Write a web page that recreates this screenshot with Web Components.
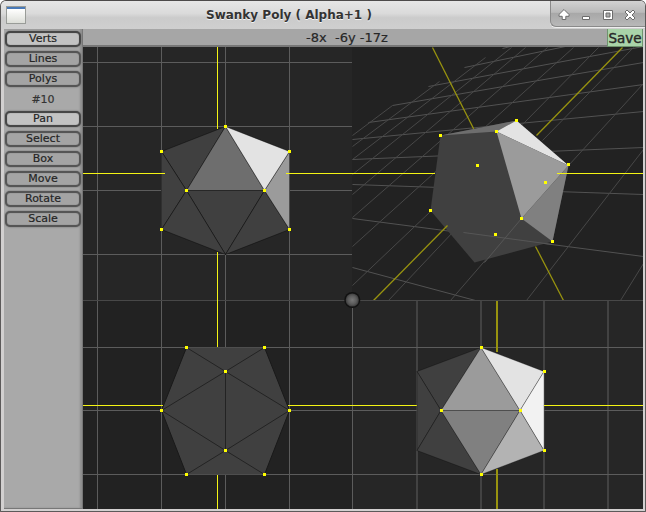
<!DOCTYPE html>
<html lang="en"><head><meta charset="utf-8"><title>Swanky Poly</title>
<style>html,body{margin:0;background:#fff;overflow:hidden}body{font-family:"DejaVu Sans",sans-serif}</style></head>
<body>
<poly-window>
<title-bar slot="title">Swanky Poly ( Alpha+1 )</title-bar>
<tool-panel slot="tools">
<tool-button active>Verts</tool-button><tool-button>Lines</tool-button><tool-button>Polys</tool-button>
<tool-count>#10</tool-count>
<tool-button active>Pan</tool-button><tool-button>Select</tool-button><tool-button>Box</tool-button><tool-button>Move</tool-button><tool-button>Rotate</tool-button><tool-button>Scale</tool-button>
</tool-panel>
<status-bar slot="status">-8x&nbsp; -6y -17z</status-bar>
<poly-views slot="views"></poly-views>
</poly-window>
<script>
const define=(name,html,setup)=>customElements.define(name,class extends HTMLElement{
  constructor(){super();this.attachShadow({mode:'open'}).innerHTML=html;if(setup)setup(this.shadowRoot)}
});

define('poly-window',`<style>
:host{display:grid;box-sizing:border-box;width:646px;height:512px;padding:0 2px 2px 3px;border:1px solid #5c5a5a;border-top-color:#4c4a4a;border-radius:6px 6px 1px 1px;background:#d2d0d0;grid-template:28px 18px 462px / 79px 560px;overflow:hidden}
::slotted([slot=title]){grid-column:1/3;margin:0 -2px 0 -3px}
::slotted([slot=tools]){grid-row:2/4}
</style><slot name="title"></slot><slot name="tools"></slot><slot name="status"></slot><slot name="views"></slot>`);

define('title-bar',`<style>
:host{display:grid;grid-template-columns:1fr 95px;background:linear-gradient(#e6e6e6,#dadada 45%,#cbcbcb 60%,#cfcfcf);color:#333;font-size:12px;font-weight:bold}
.name{display:flex;align-items:center;padding-left:5px}
.app{width:20px;height:18px;box-sizing:border-box;border:1px solid #999c98;background:linear-gradient(#4a7ab8 0 2px,#fff 2px,#dcded8)}
.text{margin-left:180px;font-size:12px;line-height:28px;text-shadow:0 1px #f4f4f4;white-space:nowrap}
.controls{height:25px;background:linear-gradient(#d2d2d2,#bababa 45%,#a8a8a8 50%,#b8b8b8);border:solid #8a8a8a;border-width:0 0 1px 1px;border-radius:0 0 0 6px;box-shadow:0 1px #eee}
svg{display:block}
</style><div class="name"><span class="app"></span><span class="text"><slot></slot></span></div>
<div class="controls"><svg width="94" height="26" viewBox="551 1 94 26"><g fill="#fff" stroke="#6c6c6c" stroke-width="1">
<path d="M564 9.500l5 5v1.800h-3.200v3.200h-3.600v-3.200H559v-1.800z"/>
<path d="M582.500 16.500h7v3h-7z"/>
<path fill-rule="evenodd" d="M603.500 10.500h9v9h-9zm2.500 2.500v4h4v-4z"/>
<path d="M625 12l2-2 3 3 3-3 2 2-3 3 3 3-2 2-3-3-3 3-2-2 3-3z"/></g></svg></div>`);

define('tool-panel',`<style>
:host{display:flex;flex-direction:column;gap:4px;box-sizing:border-box;height:480px;padding:2px 1px 0 1px;background:#a9a9a9;border-bottom:1px solid #777;border-right:1px solid #777;box-shadow:inset -2px 0 2px #8e8e8e}
</style><slot></slot>`);
define('tool-button',`<style>
:host{display:block;box-sizing:border-box;height:16px;border:2px solid #555;border-radius:5px;background:#a4a4a4;box-shadow:0 0 2px #666,inset 0 0 1px #666;color:#252525;font-size:11px;line-height:12px;text-align:center;-webkit-text-stroke:.2px #252525}
:host([active]){background:#c3c3c3;border-color:#474747}
</style><slot></slot>`);
define('tool-count',`<style>:host{display:block;height:16px;font-size:11px;line-height:17px;text-align:center;color:#333;-webkit-text-stroke:.2px #333}</style><slot></slot>`);

define('status-bar',`<style>
:host{display:grid;grid-template-columns:1fr 36px;background:#a6a6a6;color:#272727;font-size:13px;line-height:17px}
.pos{text-align:center;padding-left:4px;border-bottom:2px solid #777;height:16px;-webkit-text-stroke:.2px #272727}
.save{box-sizing:border-box;height:18px;border:solid #6e946e;border-width:0 1px 1px;background:#a9d3a9;text-align:center;font-size:13.500px;line-height:18px;-webkit-text-stroke:.4px #272727}
</style><div class="pos"><slot></slot></div><div class="save">Save</div>`);

define('poly-views',`<style>:host{display:block}svg{display:block}</style>
<svg width="560" height="462" viewBox="83 47 560 462"></svg>`,root=>{
  const out=[];
  const box=(x,y,w,h,c)=>out.push(`<rect x="${x}" y="${y}" width="${w}" height="${h}" fill="${c}"/>`);
  const v=(x,a,b,c,w=1)=>box(x,a,w,b-a,c), h=(y,a,b,c)=>box(a,y,b-a,1,c);
  const line=(a,c,w=1)=>out.push(`<line x1="${a[0]+.5}" y1="${a[1]+.5}" x2="${a[2]+.5}" y2="${a[3]+.5}" stroke="${c}" stroke-width="${w}"/>`);
  const poly=(p,c,s,dx=.5)=>out.push(`<polygon points="${p.map(q=>(q[0]+dx)+','+(q[1]+.5)).join(' ')}" fill="${c}" ${s?`stroke="${s}" stroke-width="1" stroke-linejoin="round"`:''}/>`);
  const dots=a=>a.forEach(p=>box(p[0]-1,p[1]-1,3,3,'#ffff00'));
  const Y='#f4f414', D='#98930f';
  box(83,47,269,253,'#262626');box(352,47,291,253,'#222');box(83,300,269,209,'#222');box(352,300,291,209,'#262626');

  // front view
  [97,161,225,289].forEach(x=>v(x,47,300,'#5c5c5c'));
  [62,126,190,254].forEach(y=>h(y,83,352,'#5c5c5c'));
  {const p=[[225,126],[161,151],[289,151],[186,190],[264,190],[161,229],[289,229],[225,254]];
  [[0,1,3,'#404040'],[1,3,5,'#404040'],[0,3,4,'#6e6e6e'],[3,4,7,'#404040'],[3,5,7,'#404040'],[4,6,7,'#404040'],[2,4,6,'#9b9b9b'],[0,2,4,'#e3e3e3']].forEach(f=>poly(f.slice(0,3).map(i=>p[i]),f[3],'rgba(0,0,0,.38)'));
  v(217,47,129,Y);v(217,252,300,Y);h(173,83,165,Y);
  dots(p.slice(0,7));}

  // perspective view
  [[368,122,643,84],[392,105,643,62],[428,86,643,46],[464,67,565,46],[502,48,510,46],[352,139,643,111],[352,159,643,147],[352,184,643,194],[352,218,643,256],[352,267,475,300]].forEach(a=>line(a,'#525252'));
  [[352,135,392,105],[352,146,439,81],[352,159,485,57],[352,174,511,47],[352,194,525,47],[352,217,547,47],[352,246,573,47],[352,285,430,211],[522,124,598,47],[388,300,453,231],[542,140,633,47],[450,300,521,218],[568,165,643,83],[526,300,643,149],[620,300,643,263]].forEach(a=>line(a,'#484848'));
  line([432,47,474,130],D,1.3);line([536,135,622,47],D,1.3);line([535,246,563,300],D,1.3);
  poly([[440,135],[516,120],[568,165],[552,241],[474,262],[430,210]],'#404040');
  poly([[440,135],[516,120],[496,131]],'#6e6e6e');
  poly([[496,131],[516,120],[568,165]],'#e3e3e3');
  poly([[496,131],[568,165],[521,218]],'#9b9b9b');
  poly([[568,165],[552,241],[521,218]],'#808080');
  line([463,232,552,244],'#565656');line([484,262,521,218],'#565656');
  line([373,300,447,225],D,1.3);
  h(173,286,435,Y);h(173,557,643,Y);
  dots([[440,135],[496,131],[477,165],[516,120],[568,164],[430,210],[495,234],[545,182],[521,218],[552,241]]);

  // top and side grids
  [97,161,225,289].forEach(x=>v(x,301,509,'#5c5c5c'));
  h(347,83,352,'#5c5c5c');h(410,83,352,'#5c5c5c');h(474,83,352,'#5c5c5c');
  [416,480,543,607].forEach(x=>v(x,301,509,'#424242',2));
  v(352,301,509,'#5c5c5c');
  [347,410,474].forEach(y=>h(y,352,643,'#5c5c5c'));
  h(300,83,643,'#484848');
  {const p=[[186,347],[264,347],[225,371],[161,410],[289,410],[225,450],[186,474],[264,474]];
  poly([0,1,4,7,6,3].map(i=>p[i]),'#404040');
  [[0,3],[3,6],[1,4],[4,7]].forEach(e=>line([...p[e[0]],...p[e[1]]],'#191919'));
  [[0,2],[1,2],[2,3],[2,4],[2,5],[3,5],[4,5],[5,6],[5,7]].forEach(e=>line([...p[e[0]],...p[e[1]]],'#232323'));
  v(217,300,347,Y);v(217,475,509,Y);h(405,83,163,Y);h(405,288,417,Y);dots(p);}

  // side view
  {const p=[[481,347],[417,371],[544,371],[441,410],[520,410],[417,450],[544,450],[481,474]];
  v(496,301,352,D,2);v(496,469,509,D,2);
  [[0,1,3,'#404040'],[1,3,5,'#404040'],[3,5,7,'#404040'],[0,3,4,'#9b9b9b'],[3,4,7,'#808080'],[0,2,4,'#e3e3e3'],[2,4,6,'#f2f2f2'],[4,6,7,'#b3b3b3']].forEach(f=>poly(f.slice(0,3).map(i=>p[i]),f[3],'rgba(0,0,0,.28)',0));
  h(405,544,643,Y);dots([p[0],p[2],p[3],p[4],p[6],p[7]].map(q=>[q[0]-.500+.0,q[1]]).map(q=>[Math.floor(q[0]+.5),q[1]]));}

  root.querySelector('svg').innerHTML='<defs><radialGradient id="k"><stop offset="0" stop-color="#777"/><stop offset=".65" stop-color="#5a5a5a"/><stop offset="1" stop-color="#3c3c3c"/></radialGradient></defs>'+out.join('')+'<circle cx="352.300" cy="300" r="8" fill="#111"/><circle cx="352.300" cy="300" r="6.600" fill="url(#k)"/>';
});
</script>
</body></html>
